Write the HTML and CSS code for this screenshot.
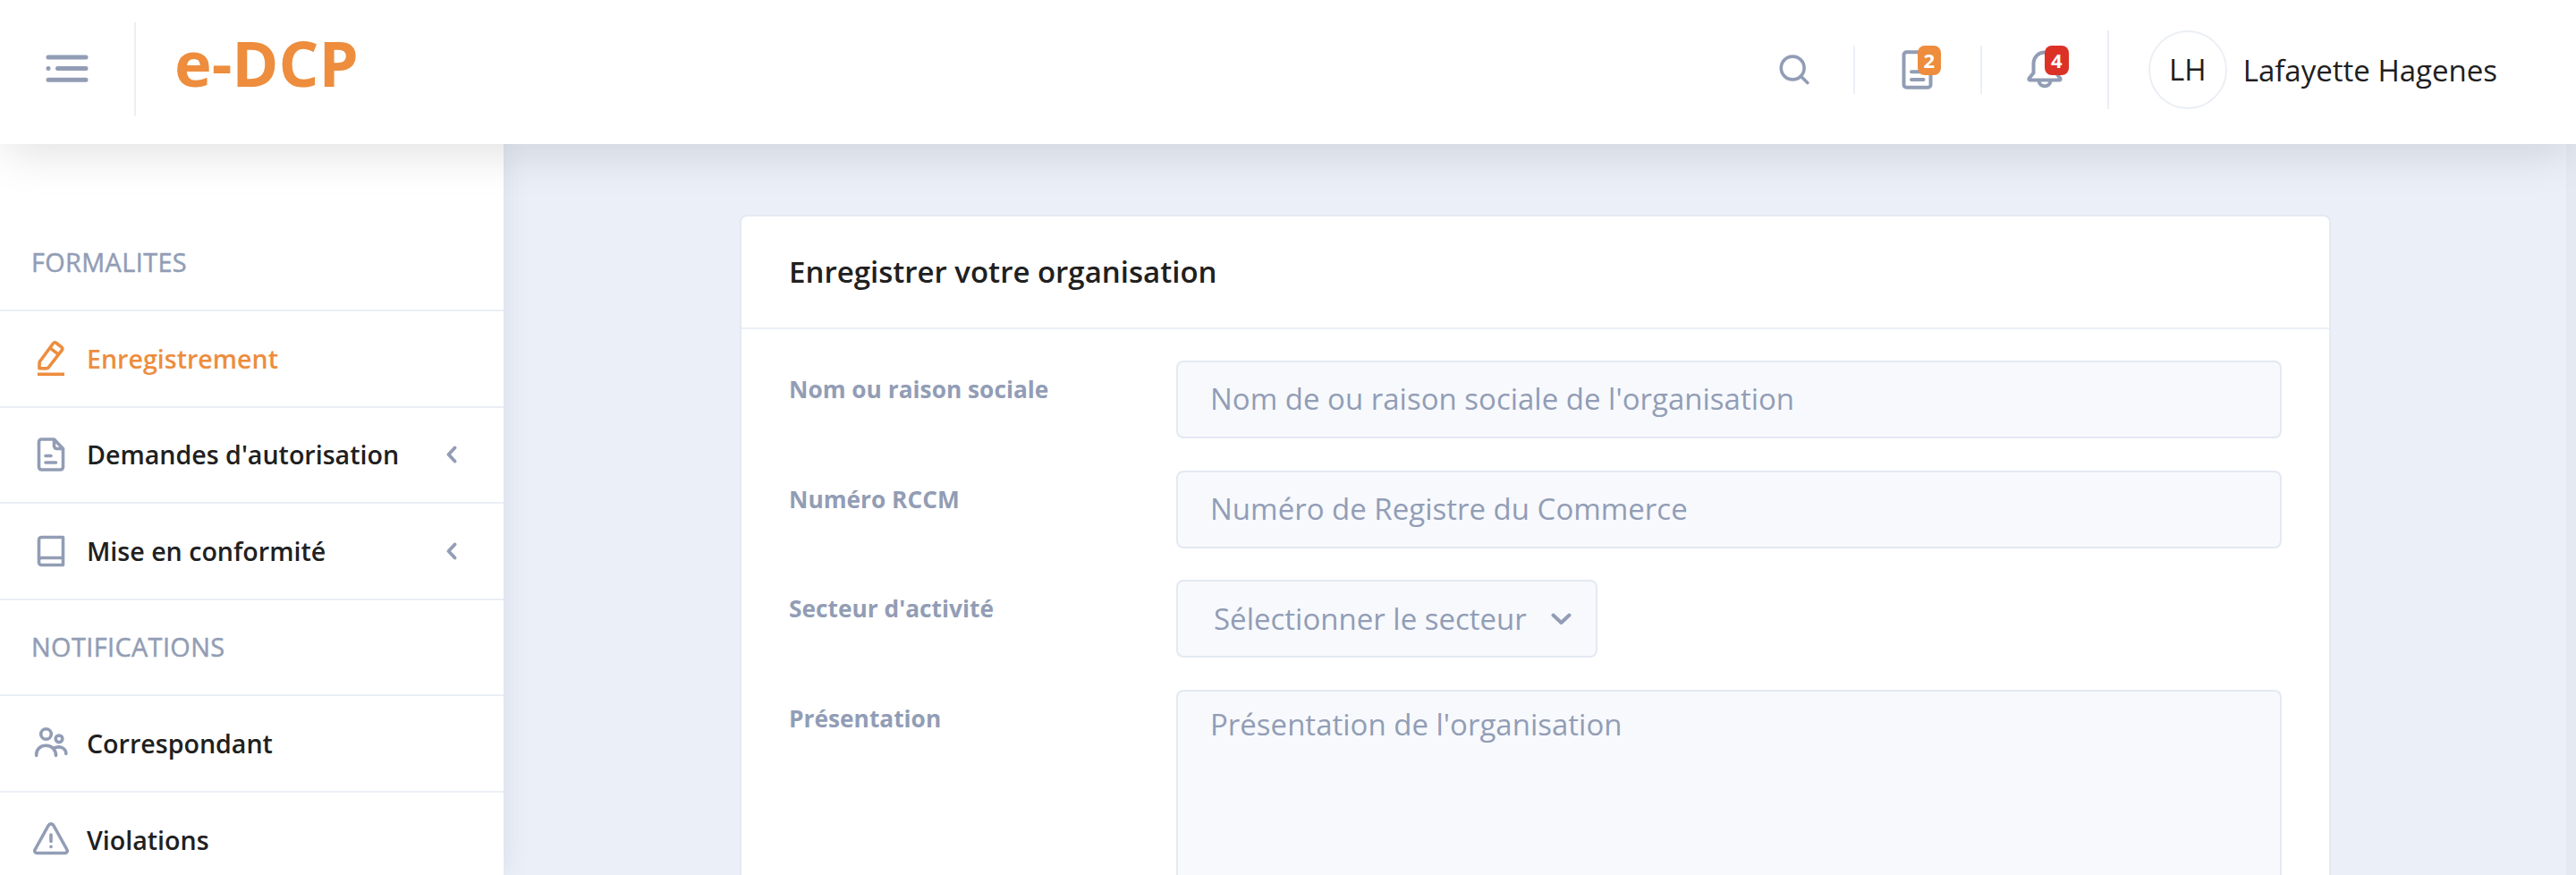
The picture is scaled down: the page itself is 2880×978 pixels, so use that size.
FILE: index.html
```html
<!DOCTYPE html>
<html lang="fr">
<head>
<meta charset="utf-8">
<title>e-DCP</title>
<link rel="stylesheet" href="styles.css">
</head>
<body>
<header class="topbar">
  <div class="topbar-left">
    <button class="menu-btn" aria-label="Menu">
      <svg width="48" height="32" viewBox="0 0 48 32" fill="none" stroke="currentColor" stroke-width="5" stroke-linecap="round"><path d="M3 3h42M3 15.500h.01M13.500 15.500H45M3 28.300h42"/></svg>
    </button>
    <a class="brand">e-DCP</a>
  </div>
  <div class="topbar-right">
    <a class="tool search">
      <svg width="34" height="34" viewBox="0 0 34 34" fill="none" stroke="currentColor" stroke-width="3.600" stroke-linecap="round"><circle cx="15.200" cy="15" r="12.900"/><path d="M24.500 24.300l7.300 7.300"/></svg>
    </a>
    <a class="tool docs">
      <svg width="36" height="44" viewBox="0 0 36 44" fill="none" stroke="currentColor" stroke-width="4" stroke-linecap="round"><rect x="2.500" y="2.300" width="30" height="39.400" rx="3"/><path d="M11 24.200h14M11 33h13.500"/></svg>
      <span class="badge orange">2</span>
    </a>
    <a class="tool bell">
      <svg width="40" height="44" viewBox="0 0 40 44" fill="none" stroke="currentColor" stroke-width="4" stroke-linecap="round" stroke-linejoin="round"><path d="M20 2.500c-7 0-12.500 5.500-12.500 12.500v10.500L2.800 31.200c-.9 1.200-.3 2.300 1 2.300h32.400c1.300 0 1.900-1.100 1-2.300l-4.700-5.700V15c0-7-5.500-12.500-12.500-12.500zM13.400 34.500a6.700 7 0 0 0 13.200 0"/></svg>
      <span class="badge red">4</span>
    </a>
    <a class="user">
      <span class="avatar">LH</span>
      <span class="user-name">Lafayette Hagenes</span>
    </a>
  </div>
</header>
<div class="layout">
  <nav class="sidebar">
    <div class="nav-title">FORMALITES</div>
    <a class="nav-item active">
      <svg class="nav-icon" viewBox="0 0 40 44" fill="none" stroke="currentColor" stroke-width="3.600" stroke-linejoin="round"><path d="M6.900 32.800L7.200 25.500 22.500 4.800q1.700-2 3.600-.3l5.600 4.400q2 1.600.4 3.700L17 32q-1.100.8-3 .9zM19.500 10.300l8.500 6.600"/><path d="M5 39.300h30"/></svg>
      <span>Enregistrement</span>
    </a>
    <a class="nav-item">
      <svg class="nav-icon" viewBox="0 0 40 44" fill="none" stroke="currentColor" stroke-width="3.600" stroke-linecap="round" stroke-linejoin="round"><path d="M23.500 5H9.500a3 3 0 0 0-3 3v28a3 3 0 0 0 3 3h21a3 3 0 0 0 3-3V15.500zM23.500 5v7.500a3 3 0 0 0 3 3h7M14 23.500h6M14 31h11.500"/></svg>
      <span>Demandes d'autorisation</span>
      <svg class="chevron" width="12" height="20" viewBox="0 0 12 20" fill="none" stroke="currentColor" stroke-width="3.800" stroke-linecap="round" stroke-linejoin="round"><path d="M9.500 2.500L2.500 10l7 7.500"/></svg>
    </a>
    <a class="nav-item">
      <svg class="nav-icon" viewBox="0 0 40 44" fill="none" stroke="currentColor" stroke-width="3.600" stroke-linejoin="round"><path d="M33.500 37.500H9.500a3 3 0 0 1-3-3V9.500a3 3 0 0 1 3-3h24zM33.500 29.500H9.500a3 3 0 0 0-3 3"/></svg>
      <span>Mise en conformité</span>
      <svg class="chevron" width="12" height="20" viewBox="0 0 12 20" fill="none" stroke="currentColor" stroke-width="3.800" stroke-linecap="round" stroke-linejoin="round"><path d="M9.500 2.500L2.500 10l7 7.500"/></svg>
    </a>
    <div class="nav-title">NOTIFICATIONS</div>
    <a class="nav-item">
      <svg class="nav-icon" viewBox="0 0 40 44" fill="none" stroke="currentColor" stroke-width="3.600" stroke-linecap="round"><circle cx="14.500" cy="11.500" r="5.800"/><circle cx="29" cy="16.800" r="3.800"/><path d="M3.700 35.500v-1.200c0-6 4.500-10 10.800-10s11 4.500 11 11.200M23.500 27.200c5.500-3 13.300-.7 13.300 6.300"/></svg>
      <span>Correspondant</span>
    </a>
    <a class="nav-item">
      <svg class="nav-icon" viewBox="0 0 40 44" fill="none" stroke="currentColor" stroke-width="3.600" stroke-linecap="round" stroke-linejoin="round"><path d="M17.200 5.500L2.200 32.500c-1 2 0 4 2.200 4h31.200c2.200 0 3.200-2 2.200-4l-15-27c-1.200-2.200-4.400-2.200-5.600 0zM20 16v7.500M20 29.300v.1"/></svg>
      <span>Violations</span>
    </a>
  </nav>
  <main class="content">
    <section class="card">
      <h1 class="card-title">Enregistrer votre organisation</h1>
      <form class="form">
        <label for="nom">Nom ou raison sociale</label>
        <input id="nom" class="field" placeholder="Nom de ou raison sociale de l'organisation">
        <label for="rccm">Numéro RCCM</label>
        <input id="rccm" class="field" placeholder="Numéro de Registre du Commerce">
        <label>Secteur d'activité</label>
        <div class="field select"><span>Sélectionner le secteur</span><svg width="23" height="14" viewBox="0 0 23 14" fill="none" stroke="currentColor" stroke-width="4" stroke-linecap="round" stroke-linejoin="round"><path d="M2.500 2.500l9 8.500 9-8.500"/></svg></div>
        <label for="pres">Présentation</label>
        <textarea id="pres" class="field area" placeholder="Présentation de l'organisation"></textarea>
      </form>
    </section>
  </main>
  <div class="scroll-track"></div>
</div>
</body>
</html>
```

FILE: styles.css
```css
* { box-sizing: border-box; }
body {
  margin: 0;
  height: 978px;
  overflow: hidden;
  background: #ebeff8;
  color: #202020;
  font-family: "Open Sans", "Noto Sans", sans-serif;
  font-size: 33px;
}
.topbar {
  position: relative;
  z-index: 2;
  display: flex;
  justify-content: space-between;
  height: 161px;
  background: #fff;
  box-shadow: 0 16px 48px -6px rgba(0, 0, 0, .12);
}
.topbar-left { display: flex; padding-top: 25px; }
.menu-btn {
  display: flex;
  align-items: flex-start;
  width: 152px;
  height: 105px;
  padding: 36px 0 0 51px;
  border: 0;
  border-right: 2px solid #ebeff5;
  background: none;
  color: #929db5;
}
.brand {
  padding-left: 43px;
  color: #ed8d3d;
  font-size: 70.500px;
  font-weight: 700;
  line-height: 91px;
}
.topbar-right { display: flex; align-items: center; height: 156px; padding-right: 88px; }
.tool {
  position: relative;
  display: flex;
  align-items: center;
  width: 142px;
  height: 54px;
  border-right: 2px solid #ebeff5;
  color: #929db5;
}
.tool.search { width: 85px; }
.tool.docs { padding-left: 52px; }
.tool.bell { height: 88px; padding-left: 50px; }
.badge {
  position: absolute;
  top: 0;
  left: 70px;
  width: 26px;
  height: 33px;
  border-radius: 8px;
  color: #fff;
  font-size: 22px;
  font-weight: 700;
  line-height: 33px;
  text-align: center;
}
.orange { background: #ed8d3d; }
.red { top: 17px; background: #dc3127; width: 27px; }
.user { display: flex; align-items: center; padding-left: 44px; }
.avatar {
  width: 88px;
  height: 88px;
  margin-right: 18px;
  border: 2px solid #ebeff5;
  border-radius: 50%;
  line-height: 84px;
  text-align: center;
}
.layout { display: flex; height: 817px; overflow: hidden; }
.sidebar {
  flex: none;
  width: 563px;
  padding-top: 79.500px;
  background: #fff;
  box-shadow: 0 0 28px rgba(80, 90, 120, .12);
}
.nav-title, .nav-item {
  display: flex;
  align-items: center;
  height: 107.600px;
  border-bottom: 2px solid #ebeff5;
  font-size: 28.600px;
}
.nav-title {
  padding: 0 0 2px 35px;
  color: #929db5;
  font-size: 28.800px;
  letter-spacing: .42px;
  -webkit-text-stroke: .5px currentColor;
}
.nav-item { padding: 0 52px 0 37px; font-weight: 600; }
.nav-item span { padding-bottom: 1px; }
.nav-icon { width: 40px; height: 44px; margin-right: 20px; color: #929db5; }
.chevron { margin-left: auto; color: #929db5; }
.active, .active .nav-icon { color: #ed8d3d; }
.content { flex: 1; padding: 79px 263px 0 264px; }
.card {
  height: 738px;
  border: 2px solid #e4e9f2;
  border-bottom: 0;
  border-radius: 8px 8px 0 0;
  background: #fff;
}
.card-title {
  height: 126px;
  margin: 0;
  padding-left: 53px;
  border-bottom: 2px solid #ebeff5;
  font-size: 33px;
  font-weight: 600;
  line-height: 123px;
}
.form {
  display: grid;
  grid-template-columns: 433px 1fr;
  grid-template-rows: 87px 87px 87px 207px;
  row-gap: 35.700px;
  padding: 35px 53px 0;
}
.form label {
  padding-top: 14px;
  color: #929db5;
  font-size: 26.300px;
  font-weight: 700;
  line-height: 36px;
}
.field {
  display: block;
  width: 100%;
  height: 100%;
  padding: 0 36px 2px;
  border: 2px solid #e4e9f2;
  border-radius: 8px;
  outline: 0;
  background: #f7f9fd;
  color: #929db5;
  font: 400 33px/46px "Open Sans", "Noto Sans", sans-serif;
}
.field::placeholder { color: #929db5; opacity: 1; }
.select {
  display: flex;
  align-items: center;
  justify-content: space-between;
  width: 471px;
  padding: 0 27px 0 40px;
}
.area {
  padding-top: 14px;
  border-bottom: 0;
  border-radius: 8px 8px 0 0;
  resize: none;
}
.scroll-track { flex: none; width: 11px; background: #e4e9f2; }
```
